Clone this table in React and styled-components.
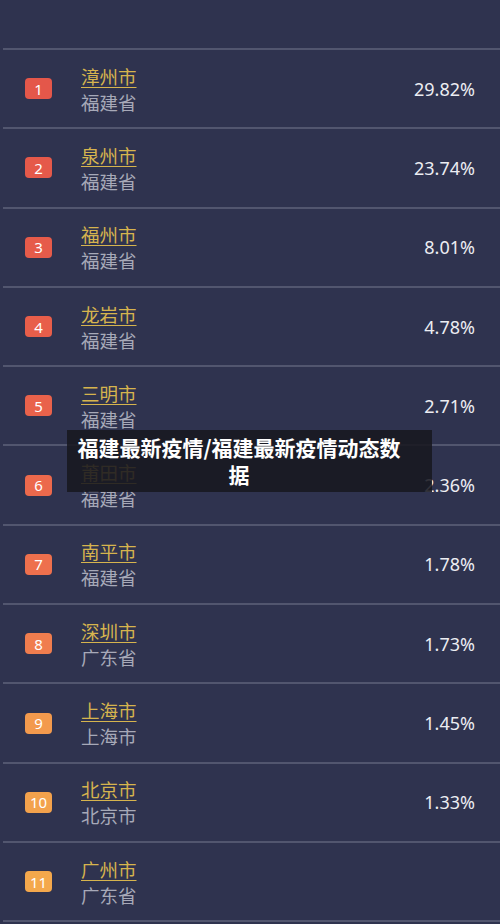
import React from "react";
import styled, { createGlobalStyle } from "styled-components";

const GlobalStyle = createGlobalStyle`
  html, body {
    margin: 0;
    padding: 0;
    background: #2f334f;
  }
  body {
    font-family: "Noto Sans", "Noto Sans CJK SC", sans-serif;
  }
`;

const Page = styled.div`
  position: relative;
  width: 500px;
  height: 924px;
  overflow: hidden;
  background: #2f334f;
  padding-top: 48px;
  box-sizing: border-box;
`;

const List = styled.div`
  border-top: 2px solid #52566f;
  margin-left: 3px;
`;

const Row = styled.div`
  display: flex;
  align-items: center;
  height: 77.3px;
  border-bottom: 2px solid #52566f;
  padding: 0 25px 0 22px;
`;

const Badge = styled.div`
  width: 27px;
  height: 21px;
  border-radius: 4px;
  background: ${(p) => p.$color};
  color: #fff;
  font-size: 15px;
  font-family: "Noto Sans", sans-serif;
  display: flex;
  align-items: center;
  justify-content: center;
  flex-shrink: 0;
`;

const Names = styled.div`
  display: flex;
  flex-direction: column;
  margin-left: 29px;
  flex: 1;
`;

const City = styled.span`
  font-family: "Noto Sans CJK SC", sans-serif;
  font-size: 18.5px;
  line-height: 26px;
  color: #d6b44e;
  text-decoration: underline;
  text-underline-offset: 3px;
  text-decoration-thickness: 1px;
`;

const Province = styled.span`
  font-family: "Noto Sans CJK SC", sans-serif;
  font-size: 18.5px;
  line-height: 26px;
  color: #a7a9b8;
`;

const Percent = styled.span`
  font-family: "Noto Sans", sans-serif;
  font-size: 18px;
  color: #ecedf2;
`;

const Caption = styled.div`
  position: absolute;
  left: 67px;
  top: 430px;
  width: 365px;
  box-sizing: border-box;
  padding: 4px 28px 4px 7px;
  background: rgba(24, 24, 32, 0.88);
  color: #fff;
  font-family: "Noto Sans CJK SC", sans-serif;
  font-weight: 700;
  font-size: 21px;
  line-height: 27px;
  text-align: center;
`;

const rows = [
  ["漳州市", "福建省", "29.82%", "#e4574a"],
  ["泉州市", "福建省", "23.74%", "#e5594a"],
  ["福州市", "福建省", "8.01%", "#e65b4a"],
  ["龙岩市", "福建省", "4.78%", "#e85e4a"],
  ["三明市", "福建省", "2.71%", "#e9624b"],
  ["莆田市", "福建省", "2.36%", "#ec694c"],
  ["南平市", "福建省", "1.78%", "#ee704d"],
  ["深圳市", "广东省", "1.73%", "#f07d4e"],
  ["上海市", "上海市", "1.45%", "#f39a4d"],
  ["北京市", "北京市", "1.33%", "#f3a24c"],
  ["广州市", "广东省", "", "#f4a84c"],
];

export default function App() {
  return (
    <>
      <GlobalStyle />
      <Page>
        <List>
          {rows.map(([city, prov, pct, color], i) => (
            <Row key={i}>
              <Badge $color={color}>{i + 1}</Badge>
              <Names>
                <City>{city}</City>
                <Province>{prov}</Province>
              </Names>
              <Percent>{pct}</Percent>
            </Row>
          ))}
        </List>
        <Caption>福建最新疫情/福建最新疫情动态数据</Caption>
      </Page>
    </>
  );
}
